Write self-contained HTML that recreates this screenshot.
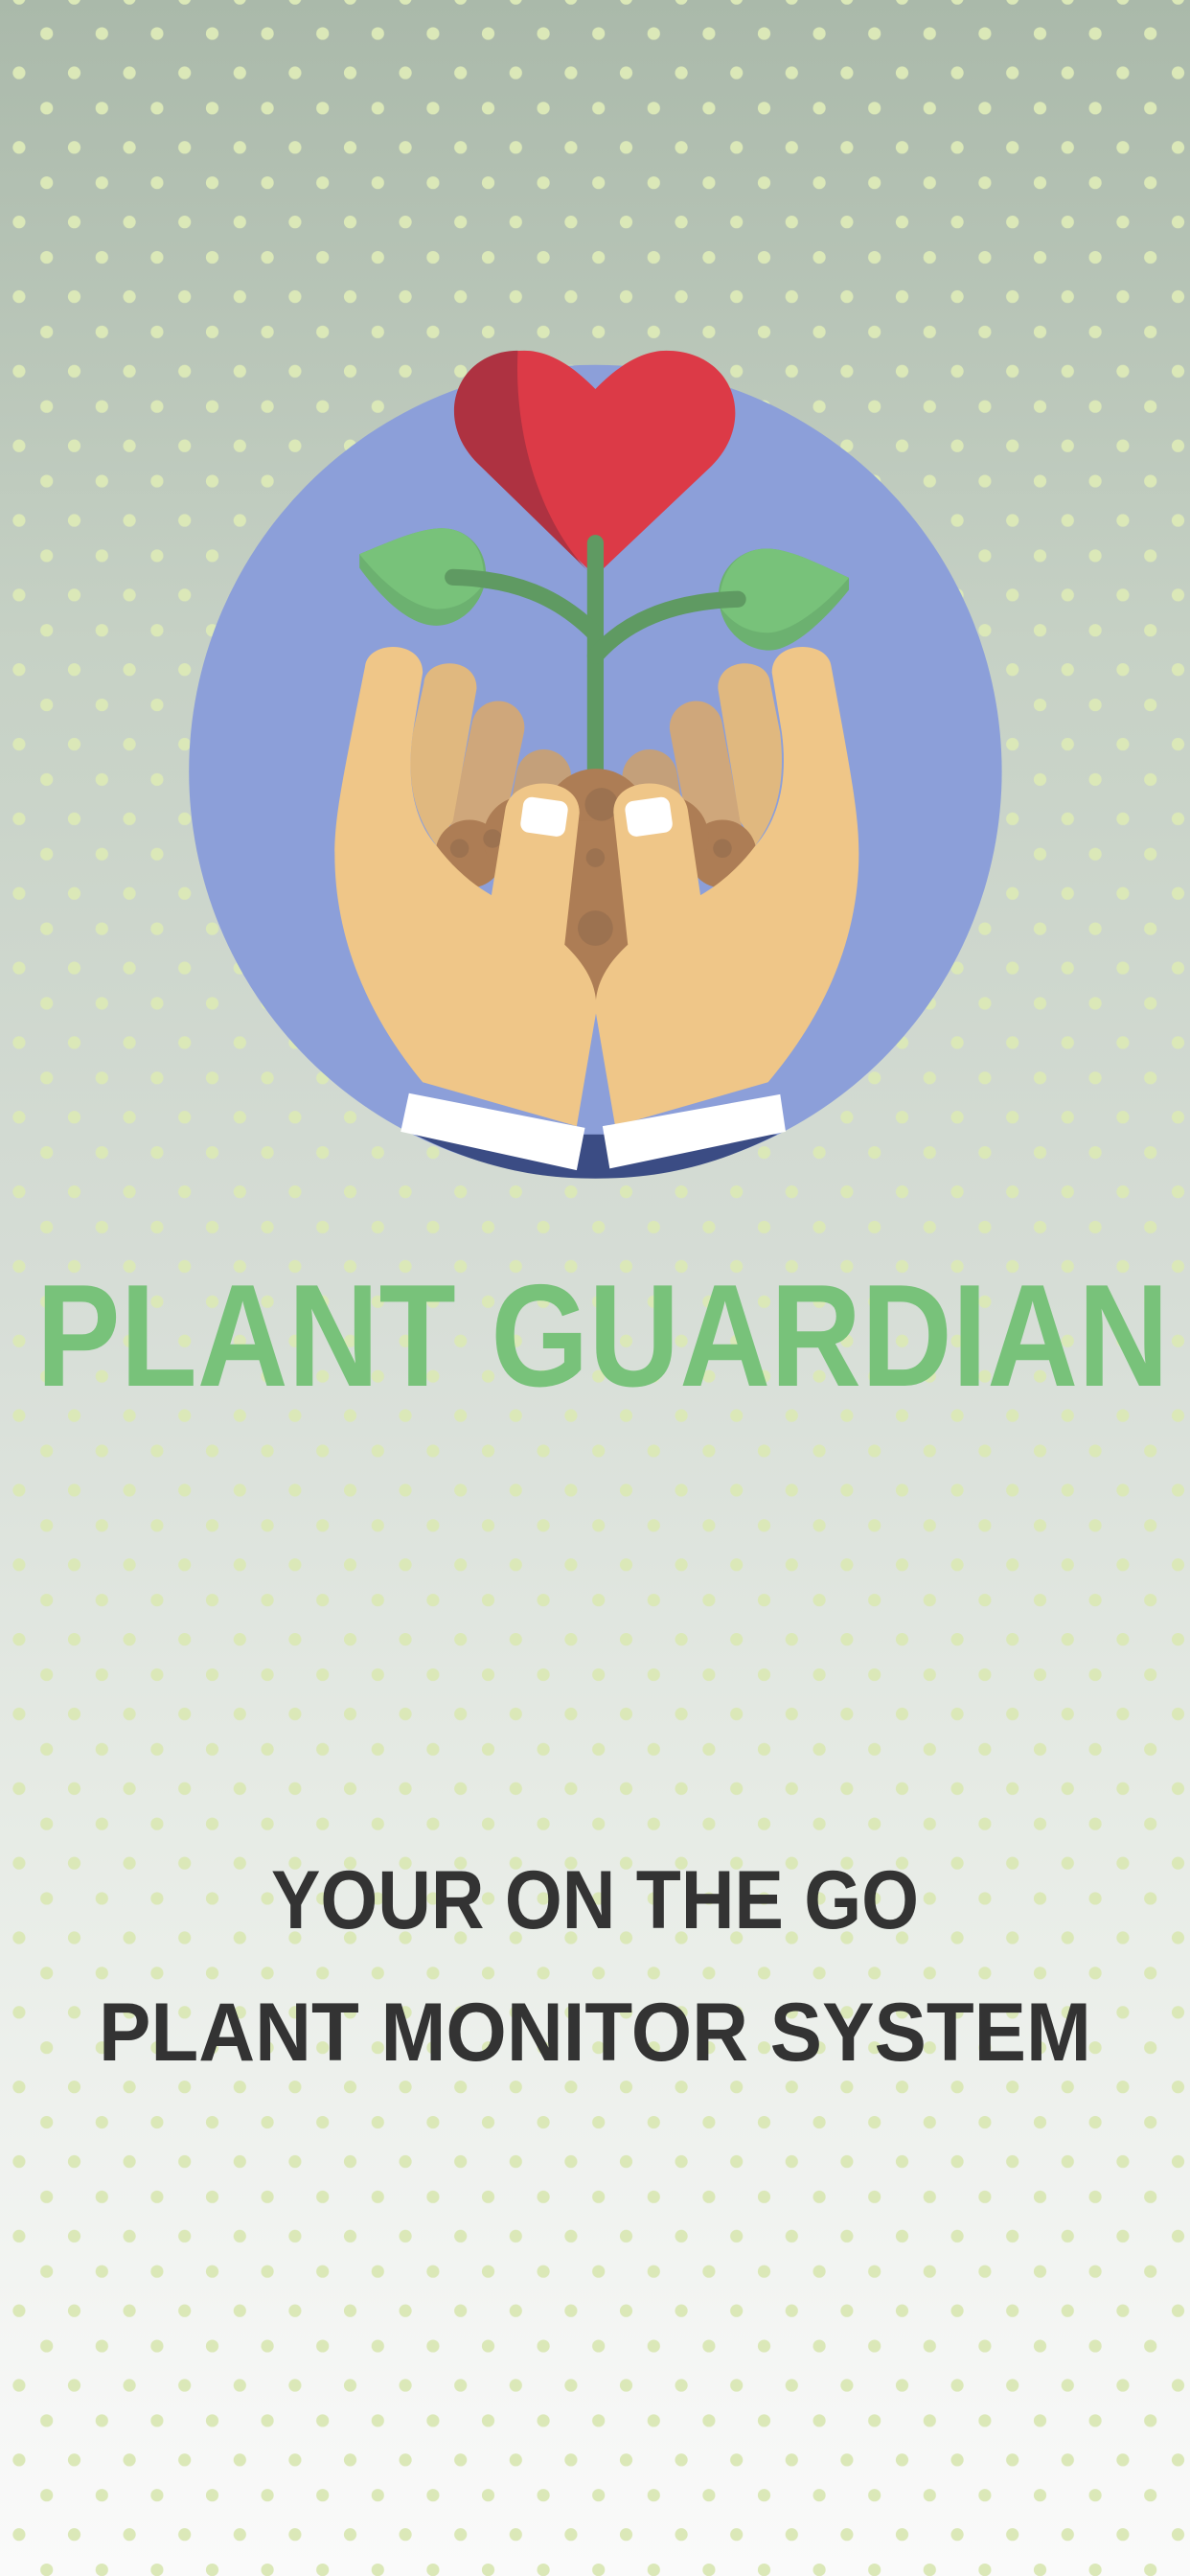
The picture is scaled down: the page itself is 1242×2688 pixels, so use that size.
<!DOCTYPE html>
<html><head><meta charset="utf-8"><style>
html,body{margin:0;padding:0;width:1242px;height:2688px;overflow:hidden}
body{background:linear-gradient(to bottom,#aab9aa 0%,#c6d1c5 25%,#d6ddd6 50%,#e6ebe5 70%,#fafafa 100%)}
svg{position:absolute;left:0;top:0}
</style></head><body>
<svg width="1242" height="2688" viewBox="0 0 1242 2688">
<defs>
<pattern id="dots" x="0" y="0" width="57.6" height="77.84" patternUnits="userSpaceOnUse">
<circle cx="48.7" cy="35" r="6.6" fill="#dbe8b8"/>
<circle cx="19.9" cy="76" r="6.6" fill="#dbe8b8"/>
<circle cx="19.9" cy="-1.84" r="6.6" fill="#dbe8b8"/>
</pattern>
</defs>
<rect width="1242" height="2688" fill="url(#dots)"/>
<g transform="translate(180,340) scale(0.574)">
<circle cx="769" cy="810" r="739" fill="#8c9fd9"/>
<path d="M440,1470 C560,1530 660,1550 769,1550 C880,1550 980,1530 1100,1470 Z" fill="#3b4c84"/>
<!-- heart -->
<path d="M769,455 L555,250 C470,165 520,45 640,45 C690,45 735,80 769,115 C803,80 848,45 898,45 C1018,45 1065,170 980,255 Z" fill="#dc3a47"/>
<path d="M628,45 C620,200 670,360 760,450 L555,250 C470,165 520,45 628,45 Z" fill="#ae3241"/>
<!-- leaves -->
<path d="M340,415 C400,390 450,368 490,368 C540,368 572,410 570,455 C565,510 520,545 480,545 C430,545 380,495 340,440 Z" fill="#6cb170"/>
<path d="M340,415 C400,390 450,368 490,368 C540,368 572,410 565,470 C540,505 510,515 480,515 C430,510 380,465 340,415 Z" fill="#78c27a"/>
<path d="M1230,458 C1170,430 1120,405 1080,405 C1030,405 993,445 993,490 C993,550 1040,590 1085,590 C1130,590 1190,530 1230,480 Z" fill="#6cb170"/>
<path d="M1230,458 C1170,430 1120,405 1080,405 C1030,405 993,445 995,510 C1020,545 1050,558 1085,558 C1130,555 1190,505 1230,458 Z" fill="#78c27a"/>
<!-- stem -->
<g stroke="#5f9a62" stroke-width="30" stroke-linecap="round" fill="none">
<path d="M769,395 L769,825"/>
<path d="M510,457 C620,460 700,490 769,560"/>
<path d="M1028,497 C920,500 830,530 769,600"/>
</g>
<!-- back fingers -->
<g stroke-linecap="round" fill="none">
<path d="M675,820 L660,900" stroke="#c4a07a" stroke-width="100"/>
<path d="M868,820 L880,900" stroke="#c4a07a" stroke-width="100"/>
<path d="M592,730 L550,930" stroke="#cfa77b" stroke-width="96"/>
<path d="M952,730 L990,930" stroke="#cfa77b" stroke-width="96"/>
</g>
<path d="M457,650 C460,600 555,600 553,660 L510,900 L480,945 C440,890 425,830 437,740 Z" fill="#e0b87f"/>
<path d="M1087,650 C1084,600 990,600 992,660 L1032,900 L1060,945 C1100,890 1115,830 1105,740 Z" fill="#e0b87f"/>
<!-- soil -->
<g fill="#ad7d55">
<circle cx="770" cy="900" r="95"/>
<circle cx="540" cy="960" r="62"/>
<circle cx="1000" cy="960" r="62"/>
<circle cx="640" cy="930" r="75"/>
<circle cx="900" cy="930" r="75"/>
<path d="M700,900 L840,900 L835,1150 L770,1240 L705,1150 Z"/>
</g>
<g fill="#9c7250">
<circle cx="780" cy="870" r="30"/><circle cx="769" cy="967" r="17"/><circle cx="769" cy="1095" r="32"/>
<circle cx="522" cy="950" r="17"/><circle cx="582" cy="932" r="17"/><circle cx="1000" cy="950" r="17"/>
</g>
<!-- palms -->
<path d="M350,620 C355,570 455,570 455,630 L437,740 C425,830 440,900 480,945 C510,985 545,1015 580,1035 L605,880 C615,815 740,815 740,885 L713,1125 C750,1160 775,1200 770,1250 L735,1455 L455,1375 C360,1260 295,1120 295,960 C295,890 310,820 350,620 Z" fill="#efc688"/>
<path d="M1198,620 C1193,570 1090,570 1090,630 L1108,740 C1120,830 1100,900 1060,945 C1030,985 995,1015 960,1035 L937,880 C927,815 800,815 802,885 L828,1125 C790,1160 765,1200 770,1250 L805,1455 L1083,1375 C1180,1260 1248,1120 1248,960 C1248,890 1235,820 1198,620 Z" fill="#efc688"/>
<!-- nails -->
<rect x="635" y="860" width="82" height="65" rx="16" fill="#fff" transform="rotate(8 676 892)"/>
<rect x="825" y="860" width="82" height="65" rx="16" fill="#fff" transform="rotate(-8 866 892)"/>
<!-- cuffs -->
<path d="M430,1395 L750,1458 L735,1535 L415,1465 Z" fill="#fff"/>
<path d="M782,1455 L1105,1397 L1115,1465 L795,1532 Z" fill="#fff"/>
</g>
<text x="38" y="1446" textLength="1182" lengthAdjust="spacingAndGlyphs" font-family="Liberation Sans, sans-serif" font-weight="bold" font-size="152" fill="#78c27a">PLANT GUARDIAN</text>
<text x="283" y="2012" textLength="676" lengthAdjust="spacingAndGlyphs" font-family="Liberation Sans, sans-serif" font-weight="bold" font-size="86" fill="#333">YOUR ON THE GO</text>
<text x="103" y="2150" textLength="1036" lengthAdjust="spacingAndGlyphs" font-family="Liberation Sans, sans-serif" font-weight="bold" font-size="86" fill="#333">PLANT MONITOR SYSTEM</text>
</svg>
</body></html>
